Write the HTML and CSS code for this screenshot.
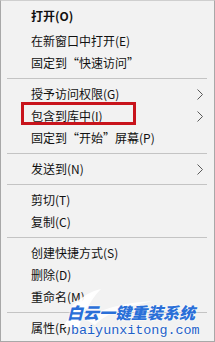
FILE: index.html
```html
<!DOCTYPE html>
<html lang="zh-CN">
<head>
<meta charset="utf-8">
<link rel="stylesheet" href="styles.css">
</head>
<body>
<div class="menu">
  <div class="item first bold">打开(O)</div>
  <div class="item">在新窗口中打开(E)</div>
  <div class="item">固定到“快速访问”</div>
  <div class="sep"></div>
  <div class="item">授予访问权限(G)<svg class="chev" width="6" height="11" viewBox="0 0 6 11"><polyline points="0.5,0.5 5.5,5.5 0.5,10.5" fill="none" stroke="#5a5a5a" stroke-width="1"/></svg></div>
  <div class="item marked">包含到库中(I)<svg class="chev" width="6" height="11" viewBox="0 0 6 11"><polyline points="0.5,0.5 5.5,5.5 0.5,10.5" fill="none" stroke="#5a5a5a" stroke-width="1"/></svg></div>
  <div class="item">固定到“开始”屏幕(P)</div>
  <div class="sep"></div>
  <div class="item">发送到(N)<svg class="chev" width="6" height="11" viewBox="0 0 6 11"><polyline points="0.5,0.5 5.5,5.5 0.5,10.5" fill="none" stroke="#5a5a5a" stroke-width="1"/></svg></div>
  <div class="sep"></div>
  <div class="item">剪切(T)</div>
  <div class="item">复制(C)</div>
  <div class="sep"></div>
  <div class="item">创建快捷方式(S)</div>
  <div class="item">删除(D)</div>
  <div class="item">重命名(M)</div>
  <div class="sep"></div>
  <div class="item">属性(R)</div>

  <div class="watermark">
    <svg class="swoosh" width="110" height="44" viewBox="0 0 110 44">
      <path d="M18,42 C26,28 34,16 48,8 C42,18 38,28 34,42 Z" fill="#ffffff" opacity="0.95"/>
      <path d="M26,22 C36,12 46,6 56,4 C50,10 46,16 42,24 Z" fill="#ffffff" opacity="0.9"/>
      <path d="M40,34 C56,24 76,18 108,16 C80,22 62,28 50,40 Z" fill="#ffffff" opacity="0.85"/>
    </svg>
    <div class="wm-cn">白云一键重装系统</div>
    <div class="wm-url">baiyunxitong.com</div>
  </div>
</div>
</body>
</html>
```

FILE: styles.css
```css
html, body {
  margin: 0;
  padding: 0;
  background: #f2f2f2;
}
.menu {
  position: relative;
  box-sizing: border-box;
  width: 215px;
  height: 342px;
  background: #f2f2f2;
  border: 1px solid #a8a8a8;
  border-top-color: #cfcfcf;
  padding-top: 4px;
  font-family: "Noto Sans CJK SC", "Microsoft YaHei", sans-serif;
  font-size: 12px;
  color: #111;
  overflow: hidden;
}
.item {
  position: relative;
  height: 22px;
  line-height: 22px;
  padding-left: 30px;
  white-space: nowrap;
}
.item.first {
  margin-bottom: 3px;
}
.bold {
  font-weight: bold;
}
.chev {
  position: absolute;
  right: 11px;
  top: 6px;
}
.sep {
  height: 1px;
  background: #c4c4c4;
  margin: 4px 7px 4px 6px;
}
.marked::after {
  content: "";
  position: absolute;
  left: 20px;
  top: -3px;
  width: 109px;
  height: 17px;
  border: 3px solid #c8141c;
}
.watermark {
  position: absolute;
  left: 34px;
  top: 282px;
  width: 178px;
  height: 58px;
}
.swoosh {
  position: absolute;
  left: 10px;
  top: 2px;
}
.wm-cn {
  position: absolute;
  left: 32px;
  top: 20px;
  font-size: 16px;
  line-height: 18px;
  font-weight: 900;
  font-style: italic;
  color: #2a6fd8;
  text-shadow: 0 0 2px #fff, 0 0 2px #fff;
  white-space: nowrap;
}
.wm-url {
  position: absolute;
  left: 36px;
  top: 40px;
  font-family: "Liberation Mono", monospace;
  font-size: 13.4px;
  line-height: 15px;
  color: #1d5fc8;
  text-shadow: 0 0 2px #fff, 0 0 2px #fff;
  white-space: nowrap;
}
```
